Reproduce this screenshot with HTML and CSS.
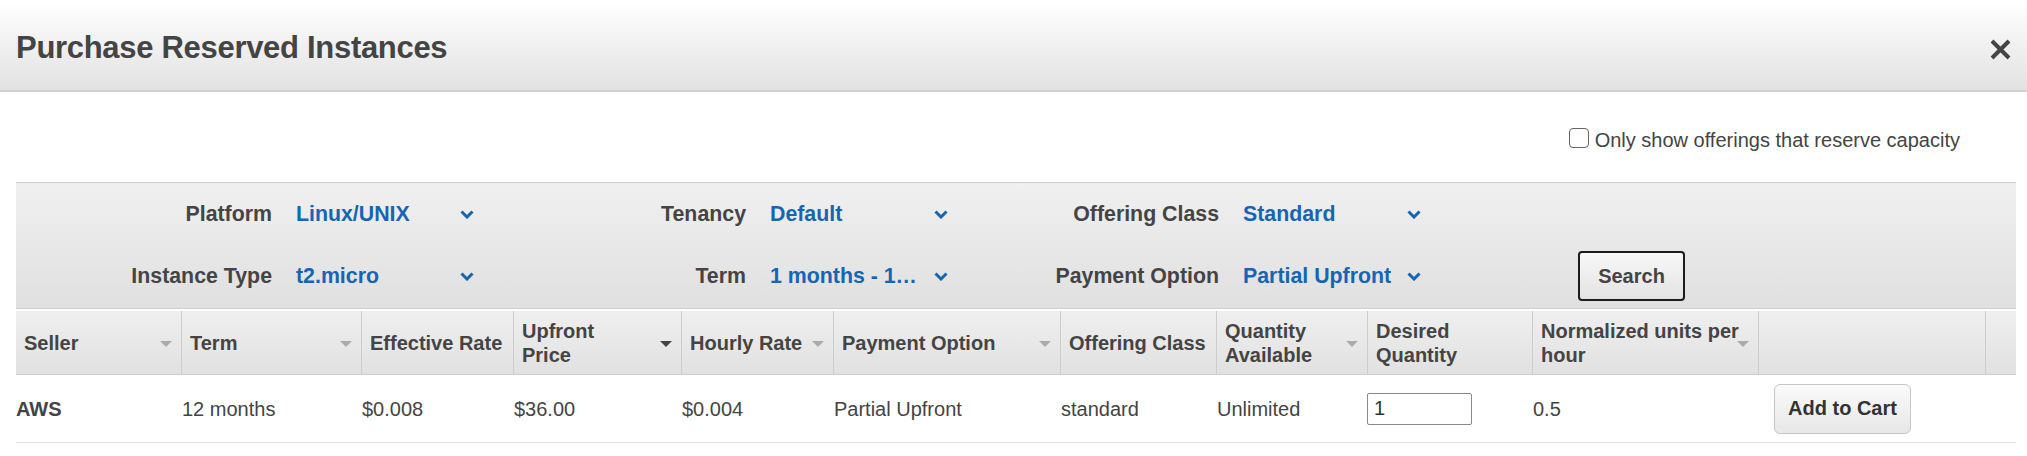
FILE: index.html
```html
<!DOCTYPE html>
<html lang="en">
<head>
<meta charset="utf-8">
<title>Purchase Reserved Instances</title>
<link rel="stylesheet" href="styles.css">
</head>
<body>
<div class="modal">
  <header class="modal-header">
    <h1 class="title">Purchase Reserved Instances</h1>
    <button class="close" aria-label="Close">
      <svg width="21" height="21" viewBox="0 0 21 21"><path d="M2 2 L19 19 M19 2 L2 19" stroke="#444" stroke-width="4" fill="none"/></svg>
    </button>
  </header>
  <div class="content">
    <div class="options">
      <label class="check"><span class="box"></span><span>Only show offerings that reserve capacity</span></label>
    </div>
    <div class="filters">
      <span class="flabel">Platform</span>
      <div class="select"><span class="sval">Linux/UNIX</span><svg class="chev" width="14" height="9" viewBox="0 0 14 9"><path d="M1.5 1.5 L7 7 L12.5 1.5" stroke="#1665b5" stroke-width="3" fill="none"/></svg></div>
      <span class="flabel">Tenancy</span>
      <div class="select"><span class="sval">Default</span><svg class="chev" width="14" height="9" viewBox="0 0 14 9"><path d="M1.5 1.5 L7 7 L12.5 1.5" stroke="#1665b5" stroke-width="3" fill="none"/></svg></div>
      <span class="flabel">Offering Class</span>
      <div class="select"><span class="sval">Standard</span><svg class="chev" width="14" height="9" viewBox="0 0 14 9"><path d="M1.5 1.5 L7 7 L12.5 1.5" stroke="#1665b5" stroke-width="3" fill="none"/></svg></div>
      <span></span>

      <span class="flabel">Instance Type</span>
      <div class="select"><span class="sval">t2.micro</span><svg class="chev" width="14" height="9" viewBox="0 0 14 9"><path d="M1.5 1.5 L7 7 L12.5 1.5" stroke="#1665b5" stroke-width="3" fill="none"/></svg></div>
      <span class="flabel">Term</span>
      <div class="select"><span class="sval">1 months - 1…</span><svg class="chev" width="14" height="9" viewBox="0 0 14 9"><path d="M1.5 1.5 L7 7 L12.5 1.5" stroke="#1665b5" stroke-width="3" fill="none"/></svg></div>
      <span class="flabel">Payment Option</span>
      <div class="select"><span class="sval">Partial Upfront</span><svg class="chev" width="14" height="9" viewBox="0 0 14 9"><path d="M1.5 1.5 L7 7 L12.5 1.5" stroke="#1665b5" stroke-width="3" fill="none"/></svg></div>
      <button class="search">Search</button>
    </div>

    <table class="grid">
      <colgroup>
        <col class="c-seller"><col class="c-term"><col class="c-eff"><col class="c-up"><col class="c-hour"><col class="c-pay"><col class="c-class"><col class="c-qty"><col class="c-des"><col class="c-norm"><col class="c-cart"><col class="c-scroll">
      </colgroup>
      <thead>
        <tr>
          <th class="sortable">Seller<span class="sort"></span></th>
          <th class="sortable">Term<span class="sort"></span></th>
          <th>Effective Rate</th>
          <th class="sortable">Upfront<br>Price<span class="sort active"></span></th>
          <th class="sortable">Hourly Rate<span class="sort"></span></th>
          <th class="sortable">Payment Option<span class="sort"></span></th>
          <th>Offering Class</th>
          <th class="sortable">Quantity<br>Available<span class="sort"></span></th>
          <th>Desired<br>Quantity</th>
          <th class="sortable norm">Normalized units per<br>hour<span class="sort"></span></th>
          <th></th>
          <th class="scroll"></th>
        </tr>
      </thead>
      <tbody>
        <tr>
          <td class="seller">AWS</td>
          <td>12 months</td>
          <td>$0.008</td>
          <td>$36.00</td>
          <td>$0.004</td>
          <td>Partial Upfront</td>
          <td>standard</td>
          <td>Unlimited</td>
          <td><input class="qty" type="text" value="1"></td>
          <td>0.5</td>
          <td><button class="cart">Add to Cart</button></td>
          <td></td>
        </tr>
      </tbody>
    </table>
  </div>
</div>
</body>
</html>
```

FILE: styles.css
```css
* { box-sizing: border-box; }

body {
  margin: 0;
  background: #fff;
  color: #444;
  font-family: "Liberation Sans", Arial, sans-serif;
}

.modal-header {
  height: 92px;
  padding: 30px 16px 0;
  background: linear-gradient(#ffffff, #e2e2e2);
  border-bottom: 2px solid #d3d3d3;
  display: flex;
  justify-content: space-between;
  align-items: flex-start;
}

.title {
  margin: 0;
  font-size: 31px;
  line-height: 36px;
  font-weight: bold;
  color: #444;
  letter-spacing: -0.3px;
}

.close {
  margin-top: 9px;
  width: 21px;
  height: 21px;
  padding: 0;
  border: 0;
  background: none;
  display: block;
}
.close svg { display: block; }

.content {
  padding: 0 11px 0 16px;
}

.options {
  height: 90px;
  padding: 36px 56px 0 0;
  display: flex;
  justify-content: flex-end;
}

.check {
  display: flex;
  align-items: flex-start;
  gap: 6px;
  font-size: 20px;
  line-height: 24px;
  color: #444;
}

.box {
  width: 20px;
  height: 20px;
  border: 1px solid #666;
  border-radius: 4px;
  background: #fff;
}

.filters {
  border-top: 1px solid #cecece;
  border-bottom: 1px solid #cecece;
  background: linear-gradient(#f0f0f0, #e0e0e0);
  display: grid;
  grid-template-columns: 256px 180px 246px 180px 245px 180px 1fr;
  grid-template-rows: 48px 48px;
  column-gap: 24px;
  row-gap: 14px;
  padding: 7px 0 8px;
  align-items: center;
}

.flabel {
  text-align: right;
  font-weight: bold;
  font-size: 21.33px;
  color: #444;
  white-space: nowrap;
}

.select {
  display: flex;
  align-items: center;
  justify-content: space-between;
  padding-right: 2px;
  color: #1665b5;
  font-weight: bold;
  font-size: 21.33px;
}

.sval {
  white-space: nowrap;
}

.chev { display: block; flex: none; }

.search {
  justify-self: start;
  margin-left: 131px;
  width: 107px;
  height: 50px;
  border: 2px solid #1c1c1c;
  border-radius: 4px;
  background: linear-gradient(#f8f8f8, #e3e3e3);
  font-family: "Liberation Sans", Arial, sans-serif;
  font-weight: bold;
  font-size: 20px;
  color: #444;
  padding: 0;
}

.grid {
  margin-top: 2px;
  width: 2000px;
  table-layout: fixed;
  border-collapse: separate;
  border-spacing: 0;
}

.c-seller { width: 166px; }
.c-term { width: 180px; }
.c-eff { width: 152px; }
.c-up { width: 168px; }
.c-hour { width: 152px; }
.c-pay { width: 227px; }
.c-class { width: 156px; }
.c-qty { width: 151px; }
.c-des { width: 165px; }
.c-norm { width: 226px; }
.c-cart { width: 227px; }
.c-scroll { width: 30px; }

.grid th {
  position: relative;
  height: 64px;
  padding: 0 8px;
  text-align: left;
  vertical-align: middle;
  white-space: nowrap;
  font-weight: bold;
  font-size: 20px;
  line-height: 24px;
  color: #444;
  background: linear-gradient(#efefef, #e1e1e1);
  border-right: 1px solid #cdcdcd;
  border-bottom: 1px solid #cdcdcd;
}

.grid th.scroll { border-right: 0; }

.sort {
  position: absolute;
  right: 9px;
  top: 50%;
  margin-top: -2px;
  width: 0;
  height: 0;
  border-left: 6px solid transparent;
  border-right: 6px solid transparent;
  border-top: 6px solid #ababab;
}
.sort.active { border-top-color: #444; }

.grid td {
  height: 68px;
  padding: 0;
  vertical-align: middle;
  white-space: nowrap;
  font-size: 20px;
  line-height: 24px;
  color: #444;
  border-bottom: 1px solid #e2e2e2;
}

.grid td.seller { font-weight: bold; }

.qty {
  display: block;
  margin-left: -1px;
  width: 105px;
  height: 32px;
  padding: 0 6px;
  border: 1px solid #8a8a8a;
  border-radius: 2px;
  font-family: "Liberation Sans", Arial, sans-serif;
  font-size: 20px;
  color: #333;
  background: #fff;
}

.cart {
  display: block;
  margin-left: 15px;
  width: 137px;
  height: 50px;
  padding: 0;
  border: 1px solid #c6c6c6;
  border-radius: 6px;
  background: linear-gradient(#fafafa, #e7e7e7);
  font-family: "Liberation Sans", Arial, sans-serif;
  font-weight: bold;
  font-size: 20px;
  color: #333;
}
```
